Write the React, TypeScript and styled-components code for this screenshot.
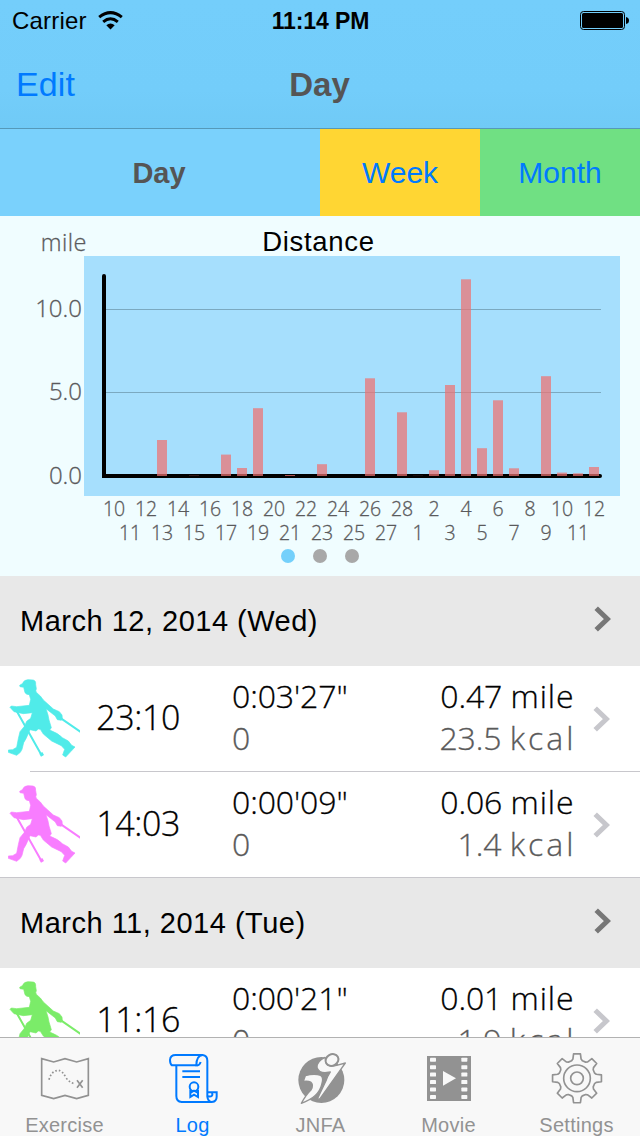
import React from 'react';
import styled, { createGlobalStyle } from 'styled-components';

const GlobalStyle = createGlobalStyle`
  * { box-sizing: border-box; }
  body { margin: 0; }
`;

const SANS = '"Liberation Sans", Arial, sans-serif';
const GEO = '"Open Sans", "Noto Sans", sans-serif';

const Screen = styled.div`
  width: 640px;
  height: 1136px;
  display: flex;
  flex-direction: column;
  overflow: hidden;
  background: #fff;
  font-family: ${SANS};
  color: #000;
`;

const Top = styled.header`
  flex: none;
  height: 129px;
  background: linear-gradient(#74cefb 0%, #73cdfa 70%, #70caf6 100%);
  border-bottom: 1px solid #5599b9;
`;

const StatusBar = styled.div`
  height: 40px;
  padding: 0 11px 0 12px;
  display: grid;
  grid-template-columns: 1fr auto 1fr;
  align-items: center;
  font-size: 24px;
  line-height: 40px;
`;

const Carrier = styled.div`
  display: flex;
  align-items: center;
  gap: 11px;
  letter-spacing: 0.2px;
`;

const Clock = styled.div`
  font-weight: 700;
  font-size: 23px;
  padding-top: 1px;
  letter-spacing: -0.1px;
`;

const Battery = styled.svg`
  justify-self: end;
`;

const NavBar = styled.div`
  height: 88px;
  display: grid;
  grid-template-columns: 1fr auto 1fr;
  align-items: center;
  padding: 1px 16px 0;
`;

const NavAction = styled.span`
  color: #007aff;
  font-size: 34px;
  letter-spacing: 0.1px;
`;

const NavTitle = styled.h1`
  margin: 0 1px 0 0;
  font-size: 33px;
  font-weight: 700;
  color: #555;
`;

const Segments = styled.nav`
  flex: none;
  display: grid;
  grid-template-columns: 2fr 1fr 1fr;
  height: 87px;
`;

const Segment = styled.div<{ $bg: string; $active?: boolean }>`
  display: flex;
  align-items: center;
  justify-content: center;
  background: ${p => p.$bg};
  color: ${p => (p.$active ? '#555' : '#007aff')};
  font-size: ${p => (p.$active ? 29 : 30)}px;
  font-weight: ${p => (p.$active ? 700 : 400)};
  padding: ${p => (p.$active ? '2px 2px 0 0' : '0')};
`;

const ChartPanel = styled.section`
  flex: none;
  height: 360px;
  background: #f0fdff;
  display: flex;
  flex-direction: column;
  color: #5a5a5c;
  font-family: ${GEO};
  font-weight: 300;
  -webkit-text-stroke: 0.3px currentColor;
`;

const ChartHead = styled.div`
  height: 40px;
  display: grid;
  grid-template-columns: 87px 1fr 87px;
  line-height: 52px;
`;

const Unit = styled.span`
  text-align: right;
  font-size: 23.5px;
  letter-spacing: 0.5px;
  line-height: 53px;
`;

const ChartTitle = styled.h2`
  margin: 0;
  text-align: center;
  font: 400 27.5px/51px ${SANS};
  letter-spacing: 0.7px;
  padding-right: 3px;
  color: #000;
  -webkit-text-stroke: 0;
`;

const PlotRow = styled.div`
  display: flex;
  height: 240px;
`;

const YAxis = styled.div`
  width: 84px;
  padding: 36px 2px 0 0;
  display: flex;
  flex-direction: column;
  gap: 51.4px;
  text-align: right;
  font-size: 24px;
  line-height: 32px;
`;

const XAxis = styled.div`
  display: grid;
  grid-template-columns: repeat(31, 16px);
  grid-template-rows: 24px 24px;
  justify-content: start;
  padding-left: 106px;
  padding-top: 1px;
`;

const XLabel = styled.span<{ $row: number; $col: number }>`
  grid-row: ${p => p.$row};
  grid-column: ${p => p.$col};
  justify-self: center;
  white-space: nowrap;
  font-size: 19.5px;
  line-height: 24px;
`;

const Dots = styled.div`
  display: flex;
  justify-content: center;
  gap: 18px;
  padding-top: 4px;
`;

const Dot = styled.i<{ $on?: boolean }>`
  width: 14px;
  height: 14px;
  border-radius: 50%;
  background: ${p => (p.$on ? '#74d0fb' : '#a8a8a8')};
`;

const List = styled.main`
  flex: 1;
  min-height: 0;
  overflow: hidden;
`;

const DayHeader = styled.div`
  height: 90px;
  background: #e8e8e8;
  display: flex;
  align-items: center;
  justify-content: space-between;
  padding: 0 28px 0 20px;
  font-size: 29px;
  letter-spacing: 0.5px;

  svg { margin-bottom: 4px; }
`;

const Row = styled.div`
  height: 106px;
  display: grid;
  grid-template-columns: 72px 100px 1fr 190px 37px;
  padding: 0 29px 0 8px;
  font-family: ${GEO};
  font-weight: 300;
  -webkit-text-stroke: 0.3px currentColor;
`;

const Rule = styled.div<{ $inset: number }>`
  height: 1px;
  margin-top: -1px;
  margin-left: ${p => p.$inset}px;
  position: relative;
  background: #c8c7cc;
`;

const WalkerIcon = styled.svg`
  display: block;
  margin-top: 12px;
`;

const StartTime = styled.div`
  text-align: right;
  font-size: 34px;
  line-height: 102px;
  letter-spacing: -0.4px;
`;

const Stats = styled.div<{ $right?: boolean }>`
  display: flex;
  flex-direction: column;
  padding: 9px 0 0 ${p => (p.$right ? 0 : 52)}px;
  text-align: ${p => (p.$right ? 'right' : 'left')};
  font-size: 32px;
  line-height: 42px;
  white-space: nowrap;
  letter-spacing: -0.1px;
`;

const Minor = styled.span`
  color: #5a5a5a;
`;

const Measure = styled.span<{ $tracking: number }>`
  letter-spacing: ${p => p.$tracking}px;
  margin-right: ${p => 0.5 - p.$tracking}px;
`;

const ChevronWrap = styled.div`
  display: flex;
  align-items: center;
  justify-content: flex-end;
  padding-bottom: 1px;
`;

const TabBar = styled.footer`
  flex: none;
  height: 99px;
  border-top: 1px solid #b2b2b2;
  background: #f8f8f8;
  display: grid;
  grid-template-columns: repeat(5, 1fr);
`;

const Tab = styled.div<{ $active?: boolean }>`
  display: flex;
  flex-direction: column;
  align-items: center;
  padding-top: 12px;
  gap: 7px;
  font-size: 20px;
  line-height: 24px;
  letter-spacing: 0.25px;
  color: ${p => (p.$active ? '#007aff' : '#929292')};
`;

const TabLabel = styled.span`
  padding-left: 1px;
`;

const TabSvg = styled.svg`
  display: block;
  flex: none;
`;

const Chevron = ({ color }: { color: string }) => (
  <svg width="18" height="26" viewBox="0 0 18 26" fill="none">
    <path d="M2.2 2.2 L13.4 13 L2.2 23.8" stroke={color} strokeWidth="5" />
  </svg>
);

const Walker = ({ color }: { color: string }) => (
  <WalkerIcon width="72" height="80" viewBox="24 54 216 240">
    <path
      fill={color}
      stroke={color}
      strokeWidth="2"
      strokeLinejoin="round"
      d="M59 76 L67 71 Q72 59 84 59 L99 60 Q108 61 107 74 L109 86 Q105 93 110 98 L121 108 L130 120 L160 147 L178 155 L186 165 L187 176 L184 181 L172 179 L166 168 L138 146 L144 165 L147 180 L154 203 L149 210 Q175 220 187 233 L205 243 L215 256 L225 261 L213 274 L197 291 L188 285 L194 268 L184 257 L155 243 L130 222 L121 208 L115 207 L108 213 L90 209 L78 236 L71 248 L66 268 L61 277 L50 286 L25 277 L25 270 L38 269 L50 262 L55 236 L60 215 L74 198 L80 184 L92 175 L97 158 L70 161 L42 155 L30 142 L34 138 L50 140 L88 136 L92 118 L88 104 Q79 104 75 98 L71 82 L60 80Z"
    />
    <path d="M50 153 L124 284 M184 176 L242 216" stroke={color} strokeWidth="6" />
    <path d="M118 281 L127 276 L132 285 L123 290Z" fill={color} />
  </WalkerIcon>
);

const BAR_TOPS: [number, number][] = [
  [3, 184], [5, 219], [7, 198.6], [8, 212], [9, 152.2], [11, 219], [13, 208.2], [16, 122.3],
  [18, 156.3], [19, 219.5], [20, 214.2], [21, 129], [22, 23.3], [23, 192.2], [24, 144.3],
  [25, 212.3], [27, 120.2], [28, 216.6], [29, 217.3], [30, 211],
];

const DAYS = [
  ...Array.from({ length: 19 }, (_, i) => i + 10),
  ...Array.from({ length: 12 }, (_, i) => i + 1),
];

const Plot = () => (
  <svg width="536" height="240" viewBox="0 0 536 240">
    <rect width="536" height="240" fill="#a6dffd" />
    <path d="M20 53.5 H517 M20 136.5 H517" stroke="#7ba9c0" strokeWidth="1.2" />
    <path d="M20 20 V220 H516" fill="none" stroke="#000" strokeWidth="4" strokeLinecap="round" />
    {BAR_TOPS.map(([i, top]) => (
      <rect
        key={i}
        x={25 + i * 16}
        y={top}
        width="10"
        height={220 - top}
        fill="#ee7170"
        opacity={i === 5 || i === 19 ? 0.2 : 0.72}
      />
    ))}
  </svg>
);

const gearPath = (() => {
  const cx = 471, cy = 355;
  const pts: string[] = [];
  const add = (r: number, deg: number) => {
    const a = (deg * Math.PI) / 180;
    pts.push(`${(cx + r * Math.sin(a)).toFixed(1)} ${(cy - r * Math.cos(a)).toFixed(1)}`);
  };
  for (let k = 0; k < 8; k++) {
    const c = k * 45;
    add(55, c - 17);
    add(59, c - 12);
    add(74, c - 8);
    add(74, c + 8);
    add(59, c + 12);
    add(55, c + 17);
  }
  return `M${pts.join('L')}Z`;
})();

const MapIcon = () => (
  <TabSvg width="56" height="56" viewBox="108 270 168 168" fill="none" stroke="currentColor" strokeWidth="5">
    <path d="M125 296 L161 306 L195 296 L230 306 L265 296 V406 L230 416 L195 406 L161 416 L125 406Z" />
    <path d="M147 359 Q154 332 176 331 Q188 333 198 353 Q208 368 226 372" strokeDasharray="5 6" />
    <path d="M231 361 L248 383 M248 361 L231 383" />
  </TabSvg>
);

const LogIcon = () => (
  <TabSvg width="56" height="56" viewBox="492 270 168 168" fill="none" stroke="currentColor" strokeWidth="6">
    <path d="M589 316 H516 Q510 312 510 300 Q511 285 527 285 H608 Q622 287 622 302 V410 Q624 426 636 426 H545 Q529 425 529 408 V316" />
    <path d="M608 285 Q589 287 589 316 Q598 318 602 306" />
    <path d="M636 426 Q650 424 650 410 V397 H623 M636 397 Q641 412 624 409" />
    <path d="M547 334 H600 M547 351 H600" />
    <circle cx="582" cy="380" r="13" />
    <path d="M571 389 V411 L582 404 L594 411 V389 M571 399 L582 392 L594 399" />
  </TabSvg>
);

const JnfaIcon = () => (
  <TabSvg width="56" height="56" viewBox="246 270 168 168">
    <circle cx="334" cy="360" r="69" fill="currentColor" />
    <g fill="#f8f8f8" stroke="currentColor" strokeWidth="4" strokeLinejoin="round">
      <path d="M286 347 Q312 340 332 346 Q342 352 335 374 Q326 412 274 430 Q288 404 303 390 Q312 374 302 366 Q294 362 280 364Z" />
      <path d="M345 292 Q320 304 321 322 Q326 338 345 338 L361 336 Q352 350 348 362 L321 419 L330 416 L386 337 L406 309 L380 316 Q352 322 348 306Z" />
      <ellipse cx="366" cy="300" rx="20" ry="17" strokeWidth="6" transform="rotate(-30 366 300)" />
    </g>
  </TabSvg>
);

const MovieIcon = () => (
  <TabSvg width="56" height="56" viewBox="0 270 168 168">
    <rect x="21" y="288" width="132" height="135" fill="currentColor" />
    {[0, 1, 2, 3, 4, 5].map(i => (
      <g key={i} fill="#f8f8f8">
        <rect x="30" y={293 + i * 22.4} width="18" height="12" rx="2" />
        <rect x="124" y={293 + i * 22.4} width="18" height="12" rx="2" />
      </g>
    ))}
    <path d="M69 333 L108 355 L69 377Z" fill="#f8f8f8" />
  </TabSvg>
);

const GearIcon = () => (
  <TabSvg width="56" height="56" viewBox="384 270 168 168" fill="none" stroke="currentColor" strokeWidth="5" strokeLinejoin="round">
    <path d={gearPath} />
    <circle cx="471" cy="355" r="40" />
    <circle cx="471" cy="355" r="19" />
  </TabSvg>
);

type Entry = { color: string; start: string; duration: string; steps: string; miles: string; kcal: string };

const LogRow = ({ color, start, duration, steps, miles, kcal }: Entry) => (
  <Row>
    <Walker color={color} />
    <StartTime>{start}</StartTime>
    <Stats>
      <span>{duration}</span>
      <Minor>{steps}</Minor>
    </Stats>
    <Stats $right>
      <span>{miles} <Measure $tracking={0.9}>mile</Measure></span>
      <Minor>{kcal} <Measure $tracking={3}>kcal</Measure></Minor>
    </Stats>
    <ChevronWrap>
      <Chevron color="#c7c7cc" />
    </ChevronWrap>
  </Row>
);

export default function App() {
  return (
    <Screen>
      <GlobalStyle />
      <Top>
        <StatusBar>
          <Carrier>
            Carrier
            <svg width="25" height="19" viewBox="0 0 25 19" fill="none" stroke="#000" strokeWidth="3">
              <path d="M1.2 6.2 Q12.5 -3 23.8 6.2" />
              <path d="M5.2 10.8 Q12.5 4.8 19.8 10.8" />
              <path d="M8.3 14.2 Q12.5 10.8 16.7 14.2 L12.5 18.4Z" fill="#000" stroke="none" />
            </svg>
          </Carrier>
          <Clock>11:14 PM</Clock>
          <Battery width="49" height="19" viewBox="0 0 49 19">
            <rect x="0.5" y="0.5" width="44" height="18" rx="3" fill="none" stroke="#000" />
            <rect x="2" y="2" width="41" height="15" rx="1.5" />
            <path d="M46 6 Q49 6.5 49 9.5 Q49 12.5 46 13Z" />
          </Battery>
        </StatusBar>
        <NavBar>
          <NavAction>Edit</NavAction>
          <NavTitle>Day</NavTitle>
        </NavBar>
      </Top>
      <Segments>
        <Segment $bg="#7ad1fc" $active>Day</Segment>
        <Segment $bg="#ffd633">Week</Segment>
        <Segment $bg="#70e083">Month</Segment>
      </Segments>
      <ChartPanel>
        <ChartHead>
          <Unit>mile</Unit>
          <ChartTitle>Distance</ChartTitle>
        </ChartHead>
        <PlotRow>
          <YAxis>
            <span>10.0</span>
            <span>5.0</span>
            <span>0.0</span>
          </YAxis>
          <Plot />
        </PlotRow>
        <XAxis>
          {DAYS.map((d, i) => (
            <XLabel key={i} $row={(i % 2) + 1} $col={i + 1}>{d}</XLabel>
          ))}
        </XAxis>
        <Dots>
          <Dot $on />
          <Dot />
          <Dot />
        </Dots>
      </ChartPanel>
      <List>
        <DayHeader>
          March 12, 2014 (Wed)
          <Chevron color="#777" />
        </DayHeader>
        <LogRow color="#50ebe9" start="23:10" duration={`0:03'27"`} steps="0" miles="0.47" kcal="23.5" />
        <Rule $inset={30} />
        <LogRow color="#f87dff" start="14:03" duration={`0:00'09"`} steps="0" miles="0.06" kcal="1.4" />
        <Rule $inset={0} />
        <DayHeader>
          March 11, 2014 (Tue)
          <Chevron color="#777" />
        </DayHeader>
        <LogRow color="#7bec69" start="11:16" duration={`0:00'21"`} steps="0" miles="0.01" kcal="1.9" />
      </List>
      <TabBar>
        <Tab><MapIcon /><TabLabel>Exercise</TabLabel></Tab>
        <Tab $active><LogIcon /><TabLabel>Log</TabLabel></Tab>
        <Tab><JnfaIcon /><TabLabel>JNFA</TabLabel></Tab>
        <Tab><MovieIcon /><TabLabel>Movie</TabLabel></Tab>
        <Tab><GearIcon /><TabLabel>Settings</TabLabel></Tab>
      </TabBar>
    </Screen>
  );
}
